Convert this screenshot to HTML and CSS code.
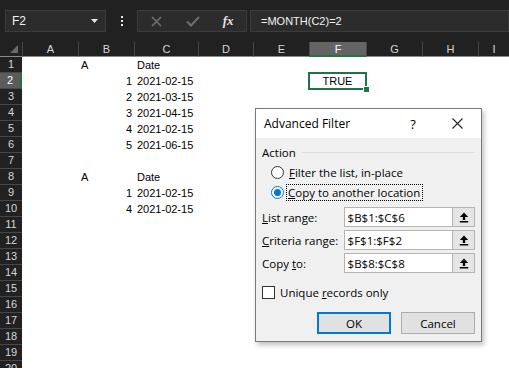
FILE: index.html
```html
<!DOCTYPE html>
<html lang="en">
<head>
    <meta charset="UTF-8">
    <meta name="viewport" content="width=device-width, initial-scale=1.0">
    <title>Advanced Filter</title>
    <link rel="stylesheet" href="styles.css">
</head>
<body>
    <div class="toolbar">
        <div class="namebox">
            <span>F2</span>
            <svg class="drop" width="7" height="4" viewBox="0 0 7 4"><path d="M0 0H7L3.5 4Z" fill="#e6e6e6"/></svg>
        </div>
        <div class="dots"><i></i><i></i><i></i></div>
        <div class="fxgroup">
            <span class="slot">
                <svg width="11" height="11" viewBox="0 0 11 11"><path d="M1 1L10 10M10 1L1 10" stroke="#707070" stroke-width="1.6"/></svg>
            </span>
            <span class="slot">
                <svg width="14" height="11" viewBox="0 0 14 11"><path d="M1 5.5L5 9.5L13 1" stroke="#707070" stroke-width="2" fill="none"/></svg>
            </span>
            <span class="slot fx">fx</span>
        </div>
        <div class="formula">=MONTH(C2)=2</div>
    </div>

    <div class="sheet">
        <div class="corner"><svg width="8" height="8" viewBox="0 0 8 8"><path d="M8 0V8H0Z" fill="#6a6a6a"/></svg></div>
        <div class="colhead">A</div>
        <div class="colhead">B</div>
        <div class="colhead">C</div>
        <div class="colhead">D</div>
        <div class="colhead">E</div>
        <div class="colhead selected">F</div>
        <div class="colhead">G</div>
        <div class="colhead">H</div>
        <div class="colhead">I</div>

        <div class="rowhead">1</div><div class="cell b">A</div><div class="cell c">Date</div>
        <div class="rowhead selected">2</div><div class="cell b num">1</div><div class="cell c">2021-02-15</div><div class="cell f active">TRUE</div>
        <div class="rowhead">3</div><div class="cell b num">2</div><div class="cell c">2021-03-15</div>
        <div class="rowhead">4</div><div class="cell b num">3</div><div class="cell c">2021-04-15</div>
        <div class="rowhead">5</div><div class="cell b num">4</div><div class="cell c">2021-02-15</div>
        <div class="rowhead">6</div><div class="cell b num">5</div><div class="cell c">2021-06-15</div>
        <div class="rowhead">7</div>
        <div class="rowhead">8</div><div class="cell b">A</div><div class="cell c">Date</div>
        <div class="rowhead">9</div><div class="cell b num">1</div><div class="cell c">2021-02-15</div>
        <div class="rowhead">10</div><div class="cell b num">4</div><div class="cell c">2021-02-15</div>
        <div class="rowhead">11</div>
        <div class="rowhead">12</div>
        <div class="rowhead">13</div>
        <div class="rowhead">14</div>
        <div class="rowhead">15</div>
        <div class="rowhead">16</div>
        <div class="rowhead">17</div>
        <div class="rowhead">18</div>
        <div class="rowhead">19</div>
        <div class="rowhead">20</div>
    </div>

    <div class="dialog">
        <div class="titlebar">
            <span class="title">Advanced Filter</span>
            <span class="help">?</span>
            <span class="close">
                <svg width="11" height="11" viewBox="0 0 11 11"><path d="M0.5 0.5L10.5 10.5M10.5 0.5L0.5 10.5" stroke="#222" stroke-width="1.1"/></svg>
            </span>
        </div>
        <div class="content">
            <div class="group"><span>Action</span><div class="rule"></div></div>
            <div class="radio-row"><span class="radio"></span><span><u>F</u>ilter the list, in-place</span></div>
            <div class="radio-row"><span class="radio checked"></span><span class="focus"><u>C</u>opy to another location</span></div>

            <div class="fields">
                <div class="field">
                    <span class="label"><u>L</u>ist range:</span>
                    <div class="input"><span>$B$1:$C$6</span><span class="pick"><svg width="10" height="11" viewBox="0 0 10 11"><path d="M5 0.5L0.8 5H9.2Z" fill="#000"/><rect x="3.8" y="4.5" width="2.4" height="3.5" fill="#000"/><rect x="0.8" y="9" width="8.4" height="1.5" fill="#000"/></svg></span></div>
                </div>
                <div class="field">
                    <span class="label"><u>C</u>riteria range:</span>
                    <div class="input"><span>$F$1:$F$2</span><span class="pick"><svg width="10" height="11" viewBox="0 0 10 11"><path d="M5 0.5L0.8 5H9.2Z" fill="#000"/><rect x="3.8" y="4.5" width="2.4" height="3.5" fill="#000"/><rect x="0.8" y="9" width="8.4" height="1.5" fill="#000"/></svg></span></div>
                </div>
                <div class="field">
                    <span class="label">Copy <u>t</u>o:</span>
                    <div class="input"><span>$B$8:$C$8</span><span class="pick"><svg width="10" height="11" viewBox="0 0 10 11"><path d="M5 0.5L0.8 5H9.2Z" fill="#000"/><rect x="3.8" y="4.5" width="2.4" height="3.5" fill="#000"/><rect x="0.8" y="9" width="8.4" height="1.5" fill="#000"/></svg></span></div>
                </div>
            </div>

            <div class="check-row"><span class="checkbox"></span><span>Unique <u>r</u>ecords only</span></div>

            <div class="buttons">
                <button class="default">OK</button>
                <button>Cancel</button>
            </div>
        </div>
    </div>
</body>
</html>
```

FILE: styles.css
```css
body {
    margin: 0;
    background-color: #212121;
    font-family: "Liberation Sans", Arial, sans-serif;
    font-size: 11px;
    position: relative;
    height: 368px;
    overflow: hidden;
}

/* formula bar */
.toolbar {
    display: flex;
    align-items: flex-start;
    height: 42px;
    padding: 10px 0 0 5px;
    box-sizing: border-box;
}
.namebox {
    width: 101px;
    height: 22px;
    box-sizing: border-box;
    background-color: #2c2c2c;
    border: 1px solid #3c3c3c;
    display: flex;
    align-items: center;
    justify-content: space-between;
    padding: 0 7px 0 6px;
    color: #f2f2f2;
    font-size: 12px;
}
.dots {
    width: 31px;
    height: 22px;
    display: flex;
    flex-direction: column;
    align-items: center;
    justify-content: center;
    gap: 2px;
}
.dots i {
    width: 2px;
    height: 2px;
    background-color: #e8e8e8;
}
.fxgroup {
    width: 110px;
    height: 22px;
    box-sizing: border-box;
    background-color: #2c2c2c;
    border: 1px solid #3c3c3c;
    display: flex;
    padding-left: 1px;
}
.fxgroup .slot {
    width: 36px;
    display: flex;
    align-items: center;
    justify-content: center;
}
.fxgroup .fx {
    font-family: "Liberation Serif", serif;
    font-style: italic;
    font-weight: bold;
    font-size: 13px;
    color: #e6e6e6;
}
.formula {
    flex: 1;
    margin-left: 3px;
    height: 22px;
    box-sizing: border-box;
    background-color: #2c2c2c;
    border: 1px solid #3c3c3c;
    color: #f2f2f2;
    font-size: 11px;
    line-height: 20px;
    padding-left: 10px;
}

/* grid */
.sheet {
    display: grid;
    grid-template-columns: 22px 56px 56px 64px 55px 56px 57px 56px 56px 1fr;
    grid-template-rows: 15px;
    grid-auto-rows: 16px;
    background-color: #fff;
    color: #000;
}
.corner, .colhead {
    background-color: #212121;
    box-sizing: border-box;
    border-bottom: 1px solid #8a8a8a;
}
.corner {
    display: flex;
    align-items: flex-end;
    justify-content: flex-end;
    padding: 0 4px 3px 0;
}
.colhead {
    color: #d6d6d6;
    text-align: center;
    line-height: 14px;
    border-left: 1px solid #474747;
}
.colhead.selected {
    background-color: #646464;
    color: #fff;
    border-bottom: 2px solid #217346;
}
.rowhead {
    grid-column: 1;
    background-color: #212121;
    color: #d6d6d6;
    text-align: center;
    line-height: 15px;
    box-sizing: border-box;
    border-bottom: 1px solid #474747;
}
.rowhead.selected {
    background-color: #5c5c5c;
    color: #fff;
    border-right: 2px solid #217346;
}
.cell {
    line-height: 16px;
    padding: 0 3px;
    white-space: nowrap;
}
.cell.b { grid-column: 3; }
.cell.c { grid-column: 4; }
.cell.f { grid-column: 7; text-align: center; }
.cell.num { text-align: right; padding-right: 2px; }
.cell.active {
    position: relative;
}
.cell.active::before {
    content: "";
    position: absolute;
    inset: -1px;
    border: 2px solid #217346;
}
.cell.active::after {
    content: "";
    position: absolute;
    right: -3px;
    bottom: -3px;
    width: 5px;
    height: 5px;
    background-color: #217346;
    border-left: 1px solid #fff;
    border-top: 1px solid #fff;
}

/* dialog */
.dialog {
    position: absolute;
    left: 255px;
    top: 108px;
    width: 227px;
    height: 234px;
    box-sizing: border-box;
    border: 1px solid #7a7a7a;
    background-color: #f0f0f0;
    box-shadow: 2px 3px 5px rgba(0, 0, 0, 0.25);
    font-family: "Open Sans", "Liberation Sans", sans-serif;
    font-size: 11.5px;
    color: #000;
}
.titlebar {
    height: 29px;
    background-color: #fff;
    display: flex;
    align-items: center;
    padding-left: 8px;
}
.title {
    flex: 1;
    font-size: 12px;
}
.help {
    width: 14px;
    text-align: center;
    font-size: 13px;
    margin-right: 32px;
}
.close {
    width: 11px;
    display: flex;
    margin-right: 18px;
}
.content {
    padding: 0 6px;
}
.group {
    display: flex;
    align-items: center;
    height: 14px;
    margin-top: 7px;
}
.group .rule {
    flex: 1;
    border-top: 1px solid #dcdcdc;
    margin: 1px 0 0 6px;
}
.radio-row {
    display: flex;
    align-items: center;
    height: 20px;
    padding-left: 9px;
    gap: 5px;
}
.radio-row:first-of-type {
    margin-top: 3px;
}
.group + .radio-row {
    margin-top: 3px;
}
.radio {
    width: 13px;
    height: 13px;
    box-sizing: border-box;
    border: 1px solid #333;
    border-radius: 50%;
    background-color: #fff;
    display: flex;
    align-items: center;
    justify-content: center;
}
.radio.checked {
    border-color: #0078d7;
}
.radio.checked::after {
    content: "";
    width: 7px;
    height: 7px;
    border-radius: 50%;
    background-color: #0078d7;
}
.focus {
    border: 1px dotted #000;
    padding: 0 2px 0 1px;
    margin-left: -3px;
    line-height: 15px;
}
.fields {
    margin-top: 5px;
    display: flex;
    flex-direction: column;
    gap: 3px;
}
.field {
    display: flex;
    align-items: center;
    height: 20px;
}
.label {
    width: 82px;
}
.input {
    width: 132px;
    height: 20px;
    box-sizing: border-box;
    border: 1px solid #b4b4b4;
    background-color: #fff;
    display: flex;
    align-items: center;
    justify-content: space-between;
    padding-left: 3px;
}
.pick {
    width: 21px;
    height: 18px;
    background-color: #e5e5e5;
    border-left: 1px solid #b4b4b4;
    display: flex;
    align-items: center;
    justify-content: center;
}
.check-row {
    display: flex;
    align-items: center;
    gap: 5px;
    height: 20px;
    margin-top: 9px;
}
.checkbox {
    width: 13px;
    height: 13px;
    box-sizing: border-box;
    border: 1px solid #333;
    background-color: #fff;
}
.buttons {
    display: flex;
    justify-content: flex-end;
    gap: 10px;
    margin-top: 10px;
    padding-right: 0;
}
button {
    width: 74px;
    height: 22px;
    box-sizing: border-box;
    background-color: #e1e1e1;
    border: 1px solid #adadad;
    font-family: inherit;
    font-size: 11.5px;
    color: #000;
    padding: 0;
}
button.default {
    border: 2px solid #0078d7;
}
```
